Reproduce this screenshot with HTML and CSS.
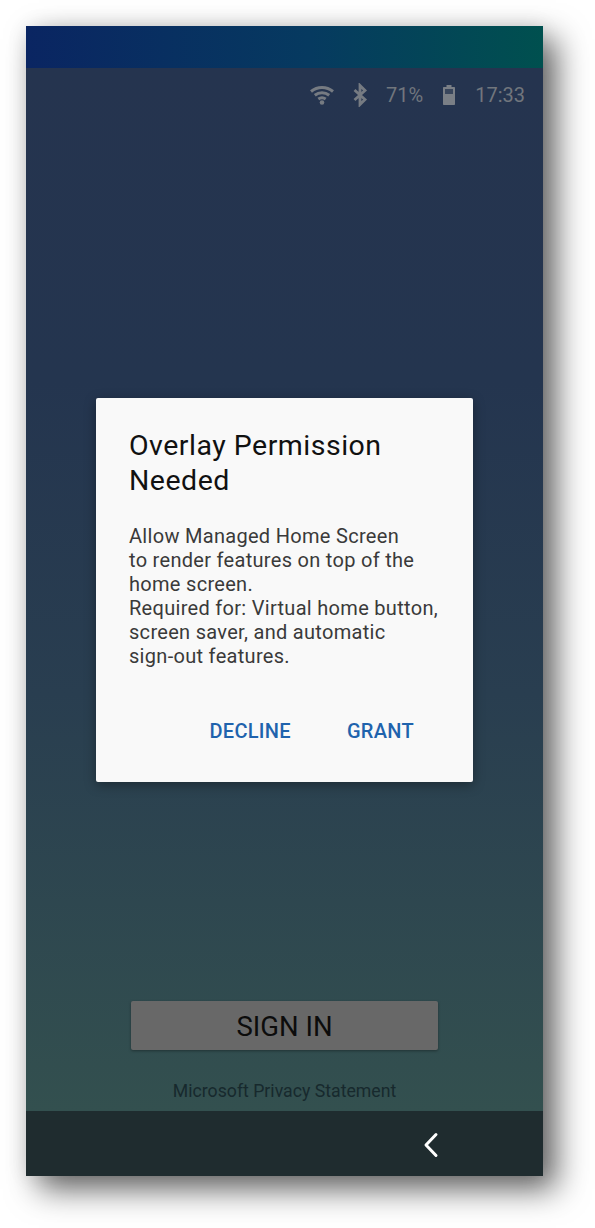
FILE: index.html
```html
<!DOCTYPE html>
<html>
<head>
  <meta charset='UTF-8'>
  <title>Overlay Permission Needed</title>
  <link rel="stylesheet" href="styles.css">
</head>
<body>
<div class="phone">
  <div class="topbar"></div>
  <div class="screen">
    <div class="status">
      <svg class="icon-wifi" width="24" height="20" viewBox="0 0 24 20">
        <path d="M1 6.5 C7.5 1 16.5 1 23 6.5" class="wave"/>
        <path d="M4.8 10.3 C9 7 15 7 19.2 10.3" class="wave"/>
        <path d="M8.3 14 C10.6 12.4 13.4 12.4 15.7 14" class="wave"/>
        <circle cx="12" cy="17.5" r="2.3" fill="#767b82"/>
      </svg>
      <svg class="icon-bt" width="16" height="24" viewBox="0 0 16 24">
        <path d="M2.5 7 L13 16.5 L8 21.5 V2.5 L13 7.5 L2.5 17" class="bt"/>
      </svg>
      <span class="pct">71%</span>
      <svg class="icon-batt" width="14" height="22" viewBox="0 0 14 22">
        <path d="M4.5 1 H9.5 V3 H12 C12.6 3 13 3.4 13 4 V20 C13 20.6 12.6 21 12 21 H2 C1.4 21 1 20.6 1 20 V4 C1 3.4 1.4 3 2 3 H4.5 Z" fill="#7a7f86"/>
        <rect x="3" y="5" width="8" height="5" fill="#39465c"/>
      </svg>
      <span class="time">17:33</span>
    </div>

    <div class="dialog">
      <h2>Overlay Permission Needed</h2>
      <p>Allow Managed Home Screen<br>to render features on top of the<br>home screen.<br>Required for: Virtual home button,<br>screen saver, and automatic<br>sign-out features.</p>
      <div class="actions">
        <span>DECLINE</span>
        <span>GRANT</span>
      </div>
    </div>

    <div class="signin">SIGN IN</div>
    <div class="privacy">Microsoft Privacy Statement</div>
  </div>
  <div class="navbar">
    <svg width="16" height="26" viewBox="0 0 16 26">
      <path d="M13 2.5 L3 13 L13 23.5" fill="none" stroke="#fff" stroke-width="3" stroke-linecap="round" stroke-linejoin="round"/>
    </svg>
  </div>
</div>
</body>
</html>
```

FILE: styles.css
```css
html, body { margin: 0; padding: 0; background: #fff; }
body { width: 595px; height: 1228px; overflow: hidden; font-family: Roboto, sans-serif; padding: 26px 0 0 26px; box-sizing: border-box; }

.phone { width: 517px; height: 1150px; display: flex; flex-direction: column; box-shadow: 13px 13px 30px rgba(0,0,0,0.62), 0 0 20px rgba(0,0,0,0.08); }

.topbar { height: 42px; background: linear-gradient(90deg, #0a2562 0%, #063a60 55%, #00504f 100%); }

.screen { flex: 1; display: flex; flex-direction: column; align-items: center; background: linear-gradient(180deg, #25344f 0%, #24354f 30%, #293e50 60%, #33504f 100%); }

.status { align-self: stretch; height: 50px; display: flex; align-items: center; justify-content: flex-end; padding: 2px 18px 0 0; color: #71767d; font-size: 20px; }
.status .wave { fill: none; stroke: #767b82; stroke-width: 3; }
.status .bt { fill: none; stroke: #767b82; stroke-width: 2.8; }
.icon-wifi { margin-right: 18px; }
.icon-bt { margin-right: 18px; }
.pct { margin-right: 19px; }
.icon-batt { margin-right: 19px; }

.dialog { width: 377px; height: 384px; box-sizing: border-box; margin-top: 278px; padding: 30px 33px 0; background: #f9f9f9; border-radius: 2px; box-shadow: 0 3px 12px rgba(0,0,0,0.35); }
.dialog h2 { margin: 0; font-size: 28.5px; font-weight: 400; letter-spacing: 0.5px; line-height: 35px; color: #111; }
.dialog p { margin: 26px 0 0; font-size: 20px; letter-spacing: 0.3px; line-height: 24px; color: #3a3a3a; }
.actions { display: flex; justify-content: flex-end; gap: 56px; margin-top: 51px; padding-right: 26px; font-size: 20px; font-weight: 500; letter-spacing: 0.3px; line-height: 24px; color: #1f63ad; }

.signin { width: 307px; height: 49px; box-sizing: border-box; padding-top: 2px; margin-top: 219px; display: flex; align-items: center; justify-content: center; background: #686868; border-radius: 2px; box-shadow: 0 1px 3px rgba(0,0,0,0.35); font-size: 27.5px; color: #0c0c0c; }
.privacy { margin-top: 30px; font-size: 17.7px; line-height: 22px; color: #17292d; }

.navbar { height: 65px; display: flex; align-items: center; justify-content: flex-end; padding: 3px 104px 0 0; box-sizing: border-box; background: #1f2c2f; }
```
